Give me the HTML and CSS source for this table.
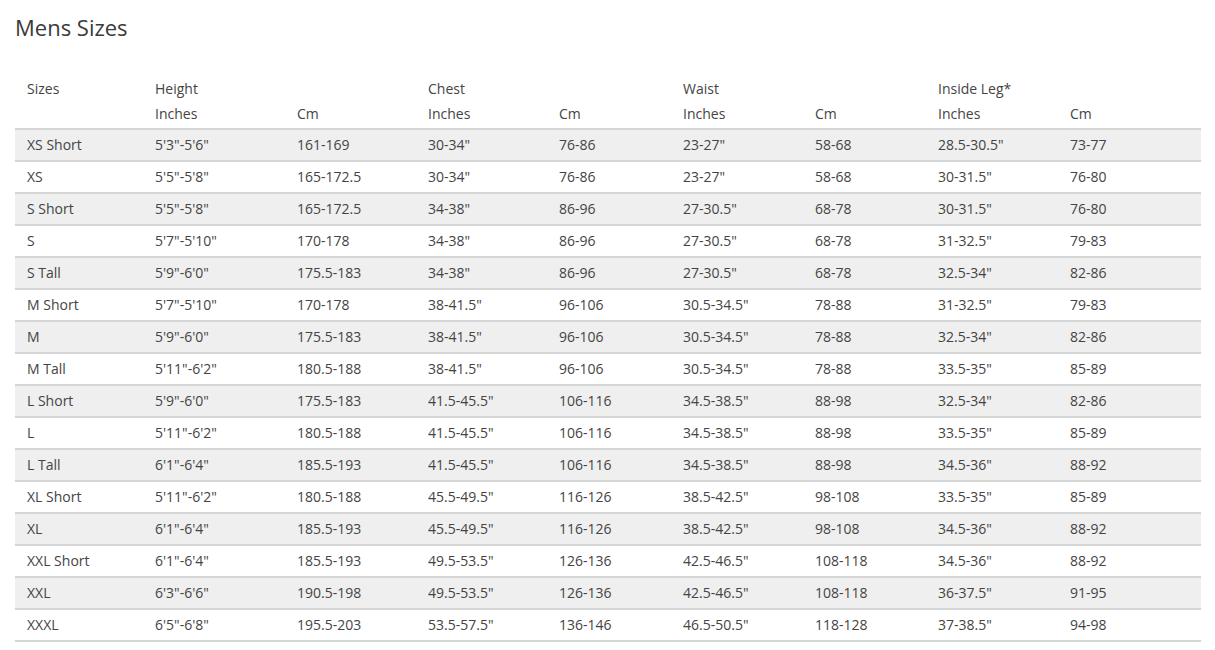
FILE: index.html
```html
<!DOCTYPE html>
<html lang="en">
<head>
<meta charset="utf-8">
<title>Mens Sizes</title>
<link rel="stylesheet" href="styles.css">
</head>
<body>
<div class="page">
  <h1 class="title">Mens Sizes</h1>
  <table class="sizes">
    <colgroup>
      <col class="c-size">
      <col class="c-a">
      <col class="c-b">
      <col class="c-c">
      <col class="c-d">
      <col class="c-e">
      <col class="c-f">
      <col class="c-g">
      <col class="c-h">
    </colgroup>
    <thead>
      <tr class="h1">
        <th>Sizes</th><th>Height</th><th></th><th>Chest</th><th></th><th>Waist</th><th></th><th>Inside Leg*</th><th></th>
      </tr>
      <tr class="h2">
        <th></th><th>Inches</th><th>Cm</th><th>Inches</th><th>Cm</th><th>Inches</th><th>Cm</th><th>Inches</th><th>Cm</th>
      </tr>
    </thead>
    <tbody>
      <tr><td>XS Short</td><td>5'3"-5'6"</td><td>161-169</td><td>30-34"</td><td>76-86</td><td>23-27"</td><td>58-68</td><td>28.5-30.5"</td><td>73-77</td></tr>
      <tr><td>XS</td><td>5'5"-5'8"</td><td>165-172.5</td><td>30-34"</td><td>76-86</td><td>23-27"</td><td>58-68</td><td>30-31.5"</td><td>76-80</td></tr>
      <tr><td>S Short</td><td>5'5"-5'8"</td><td>165-172.5</td><td>34-38"</td><td>86-96</td><td>27-30.5"</td><td>68-78</td><td>30-31.5"</td><td>76-80</td></tr>
      <tr><td>S</td><td>5'7"-5'10"</td><td>170-178</td><td>34-38"</td><td>86-96</td><td>27-30.5"</td><td>68-78</td><td>31-32.5"</td><td>79-83</td></tr>
      <tr><td>S Tall</td><td>5'9"-6'0"</td><td>175.5-183</td><td>34-38"</td><td>86-96</td><td>27-30.5"</td><td>68-78</td><td>32.5-34"</td><td>82-86</td></tr>
      <tr><td>M Short</td><td>5'7"-5'10"</td><td>170-178</td><td>38-41.5"</td><td>96-106</td><td>30.5-34.5"</td><td>78-88</td><td>31-32.5"</td><td>79-83</td></tr>
      <tr><td>M</td><td>5'9"-6'0"</td><td>175.5-183</td><td>38-41.5"</td><td>96-106</td><td>30.5-34.5"</td><td>78-88</td><td>32.5-34"</td><td>82-86</td></tr>
      <tr><td>M Tall</td><td>5'11"-6'2"</td><td>180.5-188</td><td>38-41.5"</td><td>96-106</td><td>30.5-34.5"</td><td>78-88</td><td>33.5-35"</td><td>85-89</td></tr>
      <tr><td>L Short</td><td>5'9"-6'0"</td><td>175.5-183</td><td>41.5-45.5"</td><td>106-116</td><td>34.5-38.5"</td><td>88-98</td><td>32.5-34"</td><td>82-86</td></tr>
      <tr><td>L</td><td>5'11"-6'2"</td><td>180.5-188</td><td>41.5-45.5"</td><td>106-116</td><td>34.5-38.5"</td><td>88-98</td><td>33.5-35"</td><td>85-89</td></tr>
      <tr><td>L Tall</td><td>6'1"-6'4"</td><td>185.5-193</td><td>41.5-45.5"</td><td>106-116</td><td>34.5-38.5"</td><td>88-98</td><td>34.5-36"</td><td>88-92</td></tr>
      <tr><td>XL Short</td><td>5'11"-6'2"</td><td>180.5-188</td><td>45.5-49.5"</td><td>116-126</td><td>38.5-42.5"</td><td>98-108</td><td>33.5-35"</td><td>85-89</td></tr>
      <tr><td>XL</td><td>6'1"-6'4"</td><td>185.5-193</td><td>45.5-49.5"</td><td>116-126</td><td>38.5-42.5"</td><td>98-108</td><td>34.5-36"</td><td>88-92</td></tr>
      <tr><td>XXL Short</td><td>6'1"-6'4"</td><td>185.5-193</td><td>49.5-53.5"</td><td>126-136</td><td>42.5-46.5"</td><td>108-118</td><td>34.5-36"</td><td>88-92</td></tr>
      <tr><td>XXL</td><td>6'3"-6'6"</td><td>190.5-198</td><td>49.5-53.5"</td><td>126-136</td><td>42.5-46.5"</td><td>108-118</td><td>36-37.5"</td><td>91-95</td></tr>
      <tr><td>XXXL</td><td>6'5"-6'8"</td><td>195.5-203</td><td>53.5-57.5"</td><td>136-146</td><td>46.5-50.5"</td><td>118-128</td><td>37-38.5"</td><td>94-98</td></tr>
    </tbody>
  </table>
</div>
</body>
</html>
```

FILE: styles.css
```css
html, body {
  margin: 0;
  padding: 0;
  background: #ffffff;
}

.page {
  padding: 12px 14px 0 15px;
  font-family: "Open Sans", "Liberation Sans", sans-serif;
  color: #444444;
}

.title {
  margin: 0 0 35px 0;
  font-size: 22px;
  line-height: 30px;
  font-weight: 400;
  color: #3a3a3a;
}

.sizes {
  width: 1186px;
  border-collapse: collapse;
  table-layout: fixed;
  font-size: 14px;
}

.c-size { width: 128px; }
.c-a { width: 142px; }
.c-b { width: 131px; }
.c-c { width: 131px; }
.c-d { width: 124px; }
.c-e { width: 132px; }
.c-f { width: 123px; }
.c-g { width: 132px; }
.c-h { width: 143px; }

.sizes th,
.sizes td {
  padding: 0 0 0 12px;
  text-align: left;
  font-weight: 400;
  white-space: nowrap;
  vertical-align: middle;
}

.sizes thead .h1 {
  height: 23px;
}

.sizes thead .h2 {
  height: 29px;
}

.sizes thead .h2 th {
  padding-bottom: 1px;
}

.sizes tbody tr {
  height: 32px;
  border-top: 2px solid #d5d5d5;
}

.sizes tbody td {
  padding-bottom: 2px;
}

.sizes tbody tr:last-child {
  border-bottom: 2px solid #d5d5d5;
}

.sizes tbody tr:nth-child(odd) {
  background: #efefef;
}
```
